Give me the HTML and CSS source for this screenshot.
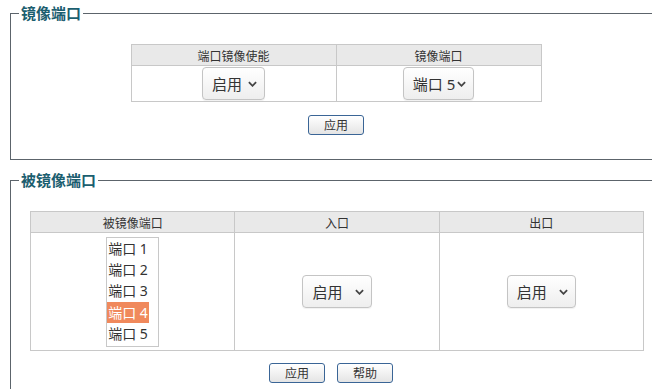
FILE: index.html
```html
<!DOCTYPE html>
<html>
<head>
    <meta charset="utf-8">
    <title>端口镜像</title>
    <link rel="stylesheet" href="styles.css">
</head>
<body>
    <div class="page">
        <!-- 镜像端口 -->
        <fieldset class="box box-mirror">
            <legend>镜像端口</legend>
            <table class="grid grid-small">
                <tr>
                    <th>端口镜像使能</th>
                    <th>镜像端口</th>
                </tr>
                <tr class="row-select">
                    <td>
                        <div class="dropdown">启用<svg class="chevron" viewBox="0 0 10 6"><path d="M1 1 L5 5 L9 1"/></svg></div>
                    </td>
                    <td>
                        <div class="dropdown dropdown-tight">端口 5<svg class="chevron" viewBox="0 0 10 6"><path d="M1 1 L5 5 L9 1"/></svg></div>
                    </td>
                </tr>
            </table>
            <div class="button-group">
                <button class="btn">应用</button>
            </div>
        </fieldset>

        <!-- 被镜像端口 -->
        <fieldset class="box box-mirrored">
            <legend>被镜像端口</legend>
            <table class="grid grid-wide">
                <tr>
                    <th>被镜像端口</th>
                    <th>入口</th>
                    <th>出口</th>
                </tr>
                <tr class="row-list">
                    <td>
                        <div class="listbox">
                            <div class="option">端口 1</div>
                            <div class="option">端口 2</div>
                            <div class="option">端口 3</div>
                            <div class="option selected">端口 4</div>
                            <div class="option">端口 5</div>
                        </div>
                    </td>
                    <td>
                        <div class="dropdown dropdown-wide">启用<svg class="chevron" viewBox="0 0 10 6"><path d="M1 1 L5 5 L9 1"/></svg></div>
                    </td>
                    <td>
                        <div class="dropdown dropdown-wide">启用<svg class="chevron" viewBox="0 0 10 6"><path d="M1 1 L5 5 L9 1"/></svg></div>
                    </td>
                </tr>
            </table>
            <div class="button-group button-group-shift">
                <button class="btn">应用</button>
                <button class="btn">帮助</button>
            </div>
        </fieldset>
    </div>
</body>
</html>
```

FILE: styles.css
```css
html { overflow: hidden; }

body {
    margin: 0;
    font-family: "Noto Sans", "Noto Sans CJK SC", sans-serif;
    color: #333;
    background: #fff;
}

.page { padding: 3px 0 0 10px; }

/* 分组框 */
.box {
    width: 652px;
    box-sizing: border-box;
    margin: 0;
    border: 1px solid #5c646b;
    border-radius: 0;
    padding: 21px 19px 24px 19px;
}

.box + .box { margin-top: 10px; }

.box legend {
    margin-left: -11px;
    padding: 0 2px;
    font-family: "Noto Sans CJK SC", sans-serif;
    font-size: 15px;
    font-weight: bold;
    line-height: 20px;
    color: #1b5e6f;
}

/* 表格 */
.grid {
    margin: 0 auto;
    border-collapse: collapse;
    table-layout: fixed;
}

.grid-small { width: 411px; }
.grid-wide { width: 614px; }

.grid th, .grid td {
    border: 1px solid #c8c8c8;
    text-align: center;
    padding: 0;
}

.grid th {
    height: 20px;
    background: #e9e9e9;
    font-family: "Noto Sans CJK SC", sans-serif;
    font-size: 12px;
    font-weight: normal;
    color: #333;
}

.row-select td { height: 35px; }
.row-list td { height: 117px; }

/* 下拉框 */
.dropdown {
    display: inline-flex;
    align-items: center;
    box-sizing: border-box;
    height: 33px;
    padding: 0 7px 0 9px;
    border: 1px solid #c4c4c4;
    border-radius: 4px;
    background: linear-gradient(#fff, #eeeeee);
    box-shadow: 0 1px 1px rgba(0, 0, 0, 0.06);
    font-size: 15px;
    color: #333;
    vertical-align: middle;
}

.dropdown .chevron {
    width: 9px;
    height: 6px;
    margin-left: 6px;
    fill: none;
    stroke: #444;
    stroke-width: 2;
}

.dropdown-tight .chevron { margin-left: 2px; }
.dropdown-wide .chevron { margin-left: 12px; }

/* 列表框 */
.listbox {
    display: inline-block;
    box-sizing: border-box;
    width: 53px;
    height: 110px;
    padding: 0;
    border: 1px solid #c8c8c8;
    text-align: left;
    vertical-align: middle;
}

.option {
    width: fit-content;
    padding: 0 1px;
    font-size: 14px;
    line-height: 21.4px;
    color: #333;
    white-space: nowrap;
}

.option.selected {
    background: #f0895c;
    color: #fff;
}

/* 按钮 */
.button-group {
    display: flex;
    justify-content: center;
    gap: 12px;
    margin-top: 13px;
}

.button-group-shift {
    margin-top: 12px;
    padding-right: 12px;
}

.btn {
    width: 56px;
    height: 20px;
    padding: 0;
    border: 1px solid #3a6596;
    border-radius: 3px;
    background: linear-gradient(#ffffff, #e4e4e4);
    font-family: "Noto Sans CJK SC", sans-serif;
    font-size: 12px;
    line-height: 18px;
    color: #333;
}
```
